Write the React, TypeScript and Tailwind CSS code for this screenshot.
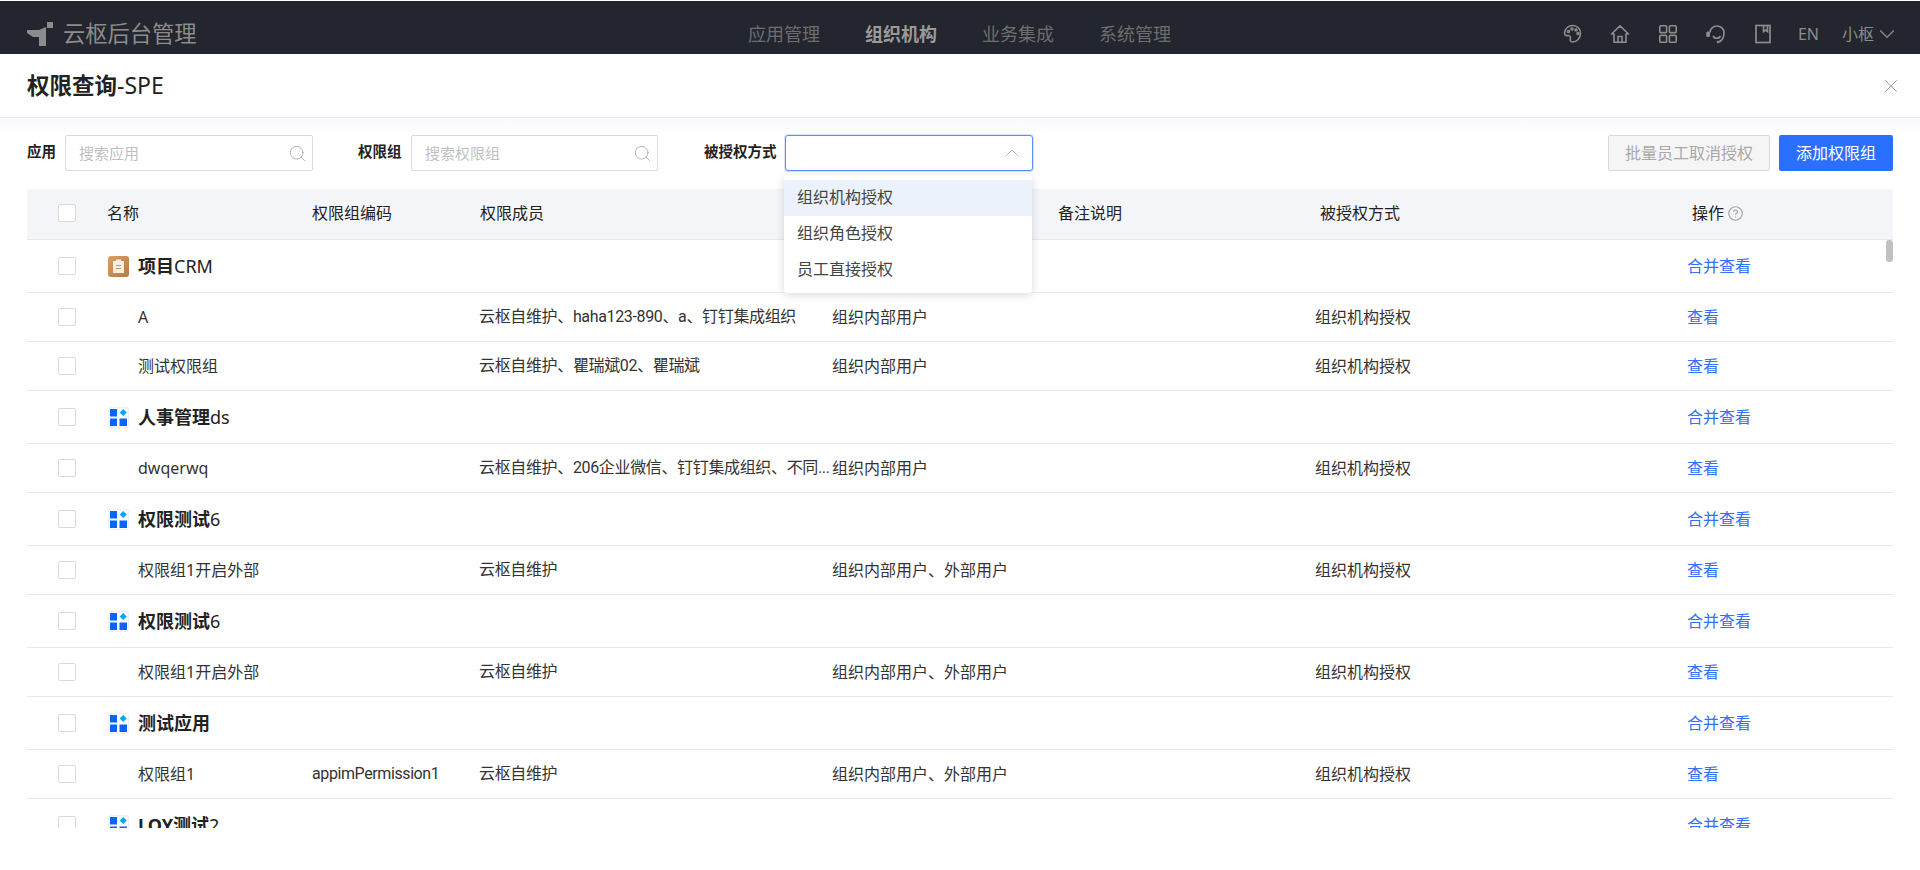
import { ChevronDown, ChevronUp, Search, X } from "lucide-react";

const FONT = "font-['Noto_Sans','Noto_Sans_CJK_SC',sans-serif]";
const NARROW = "font-['Roboto','Noto_Sans_CJK_SC',sans-serif]";

type Row =
  | { kind: "app"; name: string; icon: "crm" | "grid" }
  | { kind: "group"; name: string; code?: string; members: string; scope: string };

const rows: Row[] = [
  { kind: "app", name: "项目CRM", icon: "crm" },
  { kind: "group", name: "A", members: "云枢自维护、haha123-890、a、钉钉集成组织", scope: "组织内部用户" },
  { kind: "group", name: "测试权限组", members: "云枢自维护、瞿瑞斌02、瞿瑞斌", scope: "组织内部用户" },
  { kind: "app", name: "人事管理ds", icon: "grid" },
  { kind: "group", name: "dwqerwq", members: "云枢自维护、206企业微信、钉钉集成组织、不同...", scope: "组织内部用户" },
  { kind: "app", name: "权限测试6", icon: "grid" },
  { kind: "group", name: "权限组1开启外部", members: "云枢自维护", scope: "组织内部用户、外部用户" },
  { kind: "app", name: "权限测试6", icon: "grid" },
  { kind: "group", name: "权限组1开启外部", members: "云枢自维护", scope: "组织内部用户、外部用户" },
  { kind: "app", name: "测试应用", icon: "grid" },
  { kind: "group", name: "权限组1", code: "appimPermission1", members: "云枢自维护", scope: "组织内部用户、外部用户" },
  { kind: "app", name: "LOY测试2", icon: "grid" },
];

const navItems = ["应用管理", "组织机构", "业务集成", "系统管理"];

const Logo = () => (
  <svg width="26" height="24" viewBox="0 0 26 24" fill="#8c8c8c">
    <path d="M0 8 L12 8 L19 5 L19 24 L12 24 L12 15 L6 15 L0 11 Z" />
    <rect x="20" y="0" width="6" height="6" />
  </svg>
);

const PaletteIcon = () => (
  <svg width="20" height="20" viewBox="0 0 20 20" fill="none" stroke="#8c8c8c" strokeWidth="1.6">
    <path d="M10 1.500c-4.800 0-8.500 3.400-8.500 7.600 0 1.900 1.300 2.700 2.700 2.500 1.700-.3 3.300.3 3.300 2 0 1.200-.5 2-.2 3 .3.900 1.100 1.400 2.200 1.400 4.400 0 8-3.800 8-8.500 0-4.500-3.300-8-7.500-8z" />
    <circle cx="5.500" cy="7.500" r="1" />
    <circle cx="9" cy="5" r="1" />
    <circle cx="13" cy="6" r="1" />
    <circle cx="15" cy="9.500" r="1" />
  </svg>
);

const HomeIcon = () => (
  <svg width="20" height="20" viewBox="0 0 20 20" fill="none" stroke="#8c8c8c" strokeWidth="1.6">
    <path d="M1.500 10 L10 1.800 L18.500 10 H16 V18.200 H4 V10 Z" strokeLinejoin="round" />
    <path d="M8 18 V12.500 H12 V18" />
  </svg>
);

const GridIcon = () => (
  <svg width="20" height="20" viewBox="0 0 20 20" fill="none" stroke="#8c8c8c" strokeWidth="1.6">
    <rect x="1.800" y="1.800" width="6.800" height="6.800" rx="0.800" />
    <rect x="11.400" y="1.800" width="6.800" height="6.800" rx="0.800" />
    <rect x="1.800" y="11.400" width="6.800" height="6.800" rx="0.800" />
    <rect x="11.400" y="11.400" width="6.800" height="6.800" rx="0.800" />
  </svg>
);

const HeadsetIcon = () => (
  <svg width="20" height="20" viewBox="0 0 20 20" fill="none" stroke="#8c8c8c" strokeWidth="1.7">
    <path d="M5 8.500 A7 6.500 0 0 1 19 8.500 C19 13 17 17 13.500 18" />
    <path d="M8 12 C9.500 15 14 15 15.500 12" />
    <rect x="1.200" y="7.500" width="3.800" height="5.500" rx="1.500" fill="#8c8c8c" stroke="none" />
    <circle cx="13" cy="18" r="1.300" fill="#8c8c8c" stroke="none" />
  </svg>
);

const BookIcon = () => (
  <svg width="20" height="20" viewBox="0 0 20 20" fill="none" stroke="#8c8c8c" strokeWidth="1.7">
    <rect x="3" y="1.500" width="14" height="17" />
    <path d="M10.500 1.500 V7.500 L12.500 6 L14.500 7.500 V1.500" />
  </svg>
);

const HelpIcon = () => (
  <svg width="15" height="15" viewBox="0 0 14 14" fill="none" stroke="#a8a8a8" strokeWidth="1.100">
    <circle cx="7" cy="7" r="6.300" />
    <path d="M5.200 5.500 C5.200 3.300 8.800 3.300 8.800 5.400 C8.800 6.600 7 6.700 7 8.300" />
    <circle cx="7" cy="10.200" r="0.600" fill="#a8a8a8" stroke="none" />
  </svg>
);

const AppIcon = ({ type }: { type: "crm" | "grid" }) =>
  type === "crm" ? (
    <div className="flex h-[21px] w-[21px] items-center justify-center rounded-[3px] bg-gradient-to-br from-[#d9a066] to-[#b97a3e]">
      <svg width="11" height="14" viewBox="0 0 11 14">
        <path d="M0 2 H3 V0.500 H8 V2 H11 V14 H0 Z" fill="#fbeedd" />
        <rect x="3" y="6" width="5" height="1" fill="#c98f55" />
        <rect x="3" y="9" width="5" height="1" fill="#c98f55" />
      </svg>
    </div>
  ) : (
    <div className="flex h-[21px] w-[21px] items-center justify-center rounded-[3px] border border-[#f0f0f0] bg-white">
      <svg width="17" height="17" viewBox="0 0 17 17">
        <rect x="0" y="0" width="7" height="7.500" fill="#0a63ff" />
        <rect x="0" y="9.500" width="7" height="7.500" fill="#0a63ff" />
        <rect x="9.500" y="9.500" width="7.500" height="7.500" fill="#0a63ff" />
        <path d="M13.200 0 L16.700 3.500 L13.200 7 L9.700 3.500 Z" fill="#00a6ff" />
      </svg>
    </div>
  );

const Checkbox = () => (
  <div className="ml-[31px] h-[18px] w-[18px] shrink-0 rounded-[2px] border border-[#d9d9d9] bg-white" />
);

const SearchInput = ({ placeholder, width }: { placeholder: string; width: string }) => (
  <div className={`flex h-[36px] items-center justify-between rounded-[2px] border border-[#d9d9d9] bg-white pl-[13px] pr-[5px] ${width}`}>
    <span className="text-[15px] text-[#bfbfbf]">{placeholder}</span>
    <Search size={19} strokeWidth={1.1} color="#a8a8a8" />
  </div>
);

const App = () => {
  return (
    <div className={`${FONT} h-[870px] w-[1920px] overflow-hidden bg-white pt-px`}>
      {/* Top nav */}
      <header className="relative flex h-[53px] items-center bg-[#23262e] pl-[27px] pr-[27px] pt-[13px]">
        <Logo />
        <span className="ml-[10px] text-[22.250px] text-[#8c8c8c]">云枢后台管理</span>
        <nav className="absolute left-[748px] flex gap-[45px] text-[18px] text-[#6e6e6e]">
          {navItems.map((item, i) => (
            <span key={item} className={i === 1 ? "font-bold text-[#9a9a9a]" : ""}>
              {item}
            </span>
          ))}
        </nav>
        <div className="ml-auto mr-[-7px] flex items-center text-[16px] text-[#8c8c8c]">
          <div className="flex items-center gap-[27.500px]">
            <PaletteIcon />
            <HomeIcon />
            <GridIcon />
            <HeadsetIcon />
            <BookIcon />
          </div>
          <span className="ml-[25px]">EN</span>
          <span className="ml-[23px]">小枢</span>
          <ChevronDown size={26} strokeWidth={1.100} />
        </div>
      </header>

      {/* Page title */}
      <div className="flex h-[64px] items-center justify-between border-b border-[#e6e9f2] pl-[27px] pr-[27px]">
        <h1 className="text-[23px] text-[#222]">
          <span className="text-[22.500px] font-bold">权限查询</span>-SPE
        </h1>
        <X size={22} strokeWidth={1} color="#999" className="mr-[-9px]" />
      </div>

      {/* Filters */}
      <div className="flex items-center bg-gradient-to-b from-[#f8f9fc] to-white to-[18px] pl-[27px] pr-[27px] pt-[17px]">
        <span className="mr-[9px] pb-[2px] text-[14.500px] font-bold text-[#222]">应用</span>
        <SearchInput placeholder="搜索应用" width="w-[248px]" />
        <span className="ml-[45px] mr-[9.500px] pb-[2px] text-[14.500px] font-bold text-[#222]">权限组</span>
        <SearchInput placeholder="搜索权限组" width="w-[247px]" />
        <span className="ml-[46px] mr-[8.500px] pb-[2px] text-[14.500px] font-bold text-[#222]">被授权方式</span>
        <div className="relative">
          <div className="flex h-[36px] w-[248px] items-center justify-end rounded-[3px] border border-[#5b8ff9] bg-white pr-[8px] shadow-[0_0_0_1px_rgba(60,120,255,0.2)]">
            <ChevronUp size={24} strokeWidth={0.9} color="#aaa" />
          </div>
          <div className="absolute left-[-1px] top-[40px] z-10 w-[248px] rounded-[3px] bg-white py-[5px] text-[16px] text-[#444] shadow-[0_2px_10px_rgba(0,0,0,0.15)]">
            <div className="flex h-[36px] items-center bg-[#ebf2fc] pb-[2px] pl-[13px]">组织机构授权</div>
            <div className="flex h-[36px] items-center pb-[2px] pl-[13px]">组织角色授权</div>
            <div className="flex h-[36px] items-center pb-[2px] pl-[13px]">员工直接授权</div>
          </div>
        </div>
        <button className="ml-auto h-[36px] w-[162px] rounded-[2px] border border-[#d9d9d9] bg-[#f5f5f5] text-[16px] text-[#a8a8a8]">
          批量员工取消授权
        </button>
        <button className="ml-[9px] h-[36px] w-[114px] rounded-[2px] bg-[#2b6fff] text-[16px] text-white">
          添加权限组
        </button>
      </div>

      {/* Table */}
      <div className="ml-[27px] mr-[27px] mt-[18px]">
        <div className="flex h-[51px] items-center rounded-t-[2px] border-b border-[#e8e8e8] bg-[#f4f5f9] pb-[2px] text-[16px] text-[#222]">
          <div className="flex w-[80px] shrink-0 items-center">
            <Checkbox />
          </div>
          <div className="w-[205px] shrink-0">名称</div>
          <div className="w-[168px] shrink-0">权限组编码</div>
          <div className="w-[578px] shrink-0">权限成员</div>
          <div className="w-[262px] shrink-0">备注说明</div>
          <div className="w-[372px] shrink-0">被授权方式</div>
          <div className="flex items-center gap-[4px]">
            操作
            <HelpIcon />
          </div>
        </div>
        <div className="relative h-[588px] overflow-hidden">
          {rows.map((row, i) =>
            row.kind === "app" ? (
              <div key={i} className="flex h-[53px] items-center border-b border-[#e8e8e8] text-[16px]">
                <div className="flex w-[81px] shrink-0 items-center">
                  <Checkbox />
                </div>
                <AppIcon type={row.icon} />
                <div className="ml-[9px] w-[1549px] shrink-0 text-[18px] text-[#222]">
                  <span className="font-bold">{row.name.replace(/[a-zA-Z0-9]+$/, "")}</span>
                  {row.name.match(/[a-zA-Z0-9]+$/)?.[0]}
                </div>
                <div className="text-[#3370ff]">合并查看</div>
              </div>
            ) : (
              <div key={i} className="flex h-[49px] items-center border-b border-[#e8e8e8] text-[16px] text-[#333]">
                <div className="flex w-[81px] shrink-0 items-center">
                  <Checkbox />
                </div>
                <div className="w-[204px] shrink-0 pl-[30px]">{row.name}</div>
                <div className={`w-[167px] shrink-0 tracking-[-0.4px] ${NARROW}`}>{row.code}</div>
                <div className={`w-[353px] shrink-0 whitespace-nowrap tracking-[-0.35px] ${NARROW}`}>{row.members}</div>
                <div className="w-[483px] shrink-0">{row.scope}</div>
                <div className="w-[372px] shrink-0">组织机构授权</div>
                <div className="text-[#3370ff]">查看</div>
              </div>
            ),
          )}
          <div className="absolute right-0 top-0 h-[22px] w-[7px] rounded-[3px] bg-[#c1c1c1]" />
        </div>
      </div>
    </div>
  );
};

export default App;
